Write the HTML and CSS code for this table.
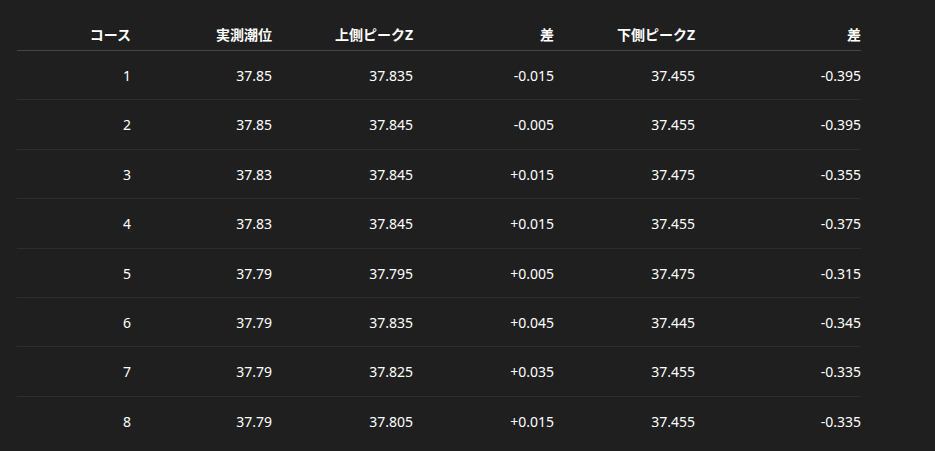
FILE: index.html
```
<!DOCTYPE html>
<html lang="ja">
<head>
<meta charset="utf-8">
<link rel="stylesheet" href="styles.css">
</head>
<body>
<table class="tide">
<colgroup>
<col class="c1"><col class="c2"><col class="c2"><col class="c2"><col class="c2"><col class="c6">
</colgroup>
<thead>
<tr><th>コース</th><th>実測潮位</th><th>上側ピークZ</th><th>差</th><th>下側ピークZ</th><th>差</th></tr>
</thead>
<tbody>
<tr><td>1</td><td>37.85</td><td>37.835</td><td>-0.015</td><td>37.455</td><td>-0.395</td></tr>
<tr><td>2</td><td>37.85</td><td>37.845</td><td>-0.005</td><td>37.455</td><td>-0.395</td></tr>
<tr><td>3</td><td>37.83</td><td>37.845</td><td>+0.015</td><td>37.475</td><td>-0.355</td></tr>
<tr><td>4</td><td>37.83</td><td>37.845</td><td>+0.015</td><td>37.455</td><td>-0.375</td></tr>
<tr><td>5</td><td>37.79</td><td>37.795</td><td>+0.005</td><td>37.475</td><td>-0.315</td></tr>
<tr><td>6</td><td>37.79</td><td>37.835</td><td>+0.045</td><td>37.445</td><td>-0.345</td></tr>
<tr><td>7</td><td>37.79</td><td>37.825</td><td>+0.035</td><td>37.455</td><td>-0.335</td></tr>
<tr><td>8</td><td>37.79</td><td>37.805</td><td>+0.015</td><td>37.455</td><td>-0.335</td></tr>
</tbody>
</table>
</body>
</html>
```
FILE: styles.css
```
html, body {
  margin: 0;
  padding: 0;
  background: #1f1f1f;
  color: #ffffff;
  font-family: "Noto Sans", "Noto Sans CJK JP", sans-serif;
  font-size: 14px;
}
.tide {
  border-collapse: collapse;
  table-layout: fixed;
  width: 844px;
  margin: 20px 0 0 17px;
}
.c1 { width: 114px; }
.c2 { width: 141px; }
.c6 { width: 166px; }
.tide th,
.tide td {
  text-align: right;
  padding: 0;
  line-height: 20px;
}
.tide th {
  font-weight: 700;
  padding: 5px 0;
  border-bottom: 1px solid #454545;
}
.tide td {
  padding: 15.1px 0 13.3px;
}
.tide tbody tr {
  border-bottom: 1px solid #2d2d2d;
}
.tide tbody tr:last-child {
  border-bottom: none;
}
```
